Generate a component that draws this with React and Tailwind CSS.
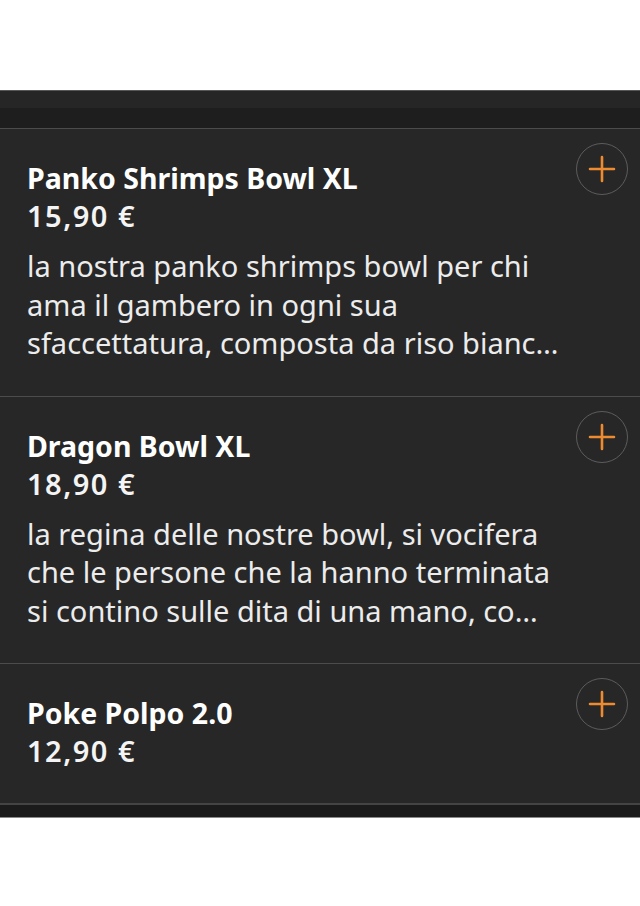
import React from "react";

const items = [
  {
    title: "Panko Shrimps Bowl XL",
    price: "15,90 €",
    desc: ["la nostra panko shrimps bowl per chi", "ama il gambero in ogni sua", "sfaccettatura, composta da riso bianc…"],
  },
  {
    title: "Dragon Bowl XL",
    price: "18,90 €",
    desc: ["la regina delle nostre bowl, si vocifera", "che le persone che la hanno terminata", "si contino sulle dita di una mano, co…"],
  },
  { title: "Poke Polpo 2.0", price: "12,90 €", desc: [] },
];

function PlusButton() {
  return (
    <div className="absolute right-[12px] top-[14px] w-[52px] h-[52px] rounded-full border-[1.5px] border-[#5c5c5c] flex items-center justify-center">
      <svg width="28" height="28" viewBox="0 0 28 28">
        <path d="M14 2 V26 M2 14 H26" stroke="#ee8a30" strokeWidth="2.6" strokeLinecap="round" />
      </svg>
    </div>
  );
}

export default function App() {
  return (
    <div className="w-[640px] h-[906px] bg-white" style={{ fontFamily: '"Noto Sans", "Open Sans", sans-serif' }}>
      <div className="h-[90px] bg-white" />
      <div className="border-t border-[#575757] bg-[#262626] h-[18px]" />
      <div className="bg-[#1e1e1e] h-[20px]" />
      {items.map((it, i) => (
        <div key={i} className="relative border-t border-[#4c4c4c] bg-[#272727] pl-[27px] pt-[30px] pb-[33px]">
          <PlusButton />
          <div className="text-[28.5px] leading-[38px] font-bold text-white">{it.title}</div>
          <div className="text-[29px] leading-[38px] font-semibold tracking-[1.5px] text-[#f4f4f4]">{it.price}</div>
          {it.desc.length > 0 && (
            <div className="mt-[12px] text-[29px] leading-[38.5px] text-[#ececec] whitespace-nowrap">
              {it.desc.map((l, j) => (
                <div key={j}>{l}</div>
              ))}
            </div>
          )}
        </div>
      ))}
      <div className="border-t-2 border-[#444444] bg-[#1b1b1b] h-[14px]" />
      <div className="border-t border-[#8a8a8a]" />
    </div>
  );
}
